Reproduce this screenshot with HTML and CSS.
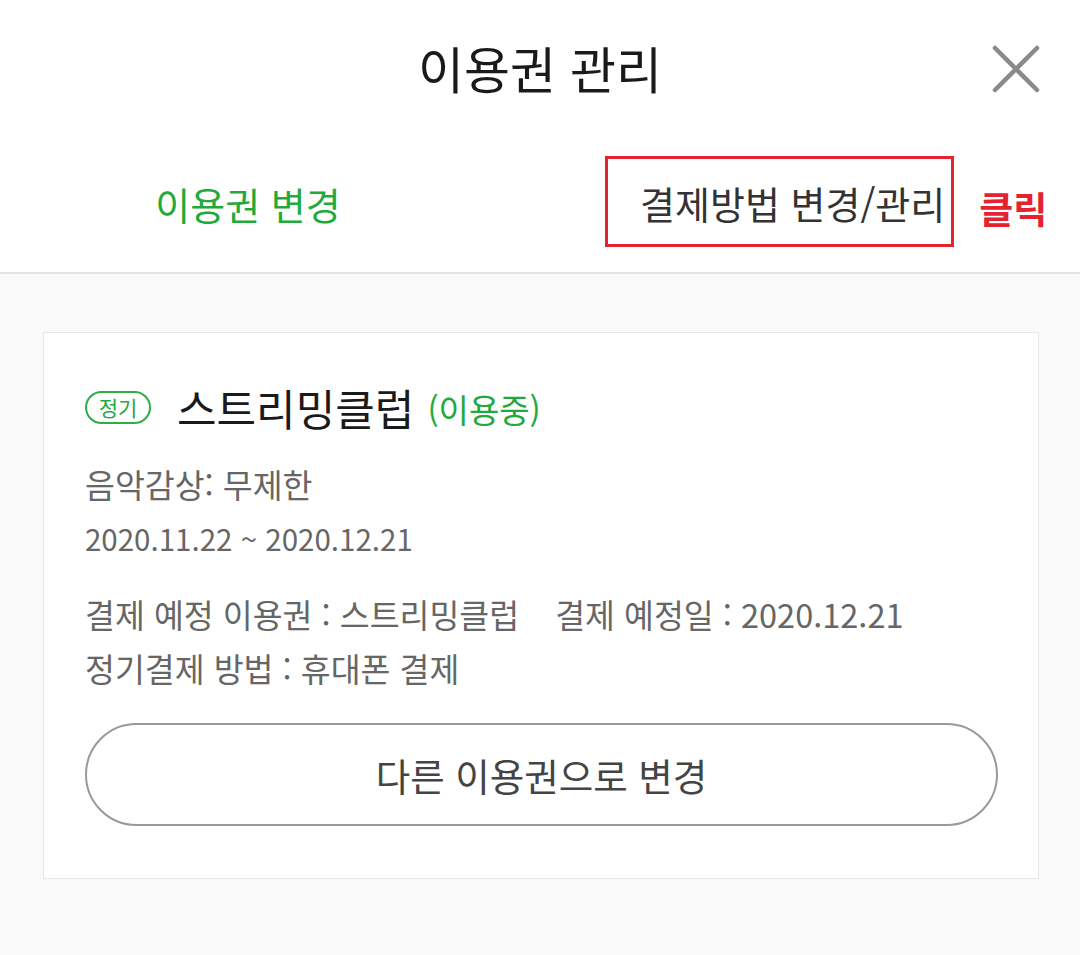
FILE: index.html
```html
<!DOCTYPE html>
<html lang="ko">
<head>
<meta charset="utf-8">
<title>이용권 관리</title>
<link rel="stylesheet" href="styles.css">
</head>
<body>
<div class="page">
  <header class="top">
    <div class="top-side"></div>
    <h1 class="title">이용권 관리</h1>
    <div class="top-side close-wrap">
      <svg class="close" width="48" height="48" viewBox="0 0 48 48" aria-label="닫기">
        <path d="M3 3 L45 45 M45 3 L3 45" stroke="#8a8a8a" stroke-width="4.5" stroke-linecap="round" fill="none"/>
      </svg>
    </div>
  </header>
  <nav class="tabs">
    <div class="tab tab-active">이용권 변경</div>
    <div class="tab-box">결제방법 변경/관리</div>
    <div class="click">클릭</div>
  </nav>
  <main class="content">
    <section class="card">
      <div class="card-head">
        <span class="badge">정기</span>
        <span class="plan">스트리밍클럽</span>
        <span class="status">(이용중)</span>
      </div>
      <div class="info first">음악감상: 무제한</div>
      <div class="info date">2020.11.22 ~ 2020.12.21</div>
      <div class="info pay">결제 예정 이용권 : 스트리밍클럽<span class="gap">결제 예정일 : 2020.12.21</span></div>
      <div class="info">정기결제 방법 : 휴대폰 결제</div>
      <button class="change-btn" type="button">다른 이용권으로 변경</button>
    </section>
  </main>
</div>
</body>
</html>
```
FILE: styles.css
```css
* { box-sizing: border-box; }
html, body { margin: 0; padding: 0; }
body {
  width: 1080px;
  height: 955px;
  background: #f9f9f9;
  font-family: "Noto Sans CJK KR", "Noto Sans", sans-serif;
  overflow: hidden;
}
.page { width: 1080px; }
.top {
  height: 136px;
  background: #fff;
  display: grid;
  grid-template-columns: 1fr auto 1fr;
  align-items: center;
}
.title {
  margin: 0;
  font-size: 50px;
  font-weight: 400;
  color: #1a1a1a;
  line-height: 1;
  padding-bottom: 2px;
}
.close-wrap {
  display: flex;
  justify-content: flex-end;
  padding-right: 40px;
  padding-top: 2px;
}
.close { display: block; }
.tabs {
  height: 138px;
  background: #fff;
  border-bottom: 2px solid #e4e4e4;
  display: flex;
  align-items: center;
}
.tab {
  width: 496px;
  text-align: center;
  font-size: 38px;
  line-height: 1;
}
.tab-active { color: #1faa3b; }
.tab-box {
  margin-left: 109px;
  height: 91px;
  margin-top: -6px;
  border: 3px solid #e3232f;
  padding: 4px 6px 0 32px;
  display: flex;
  align-items: center;
  font-size: 38px;
  color: #333;
  line-height: 1;
  white-space: nowrap;
}
.click {
  margin-left: 25px;
  font-size: 37px;
  font-weight: 700;
  color: #e3232f;
  line-height: 1;
  padding-top: 8px;
}
.content {
  padding: 58px 41px 78px 43px;
}
.card {
  background: #fff;
  border: 1px solid #e8e8e8;
  padding: 46px 41px 52px 41px;
}
.card-head {
  display: flex;
  align-items: center;
  height: 57px;
}
.badge {
  display: inline-flex;
  align-items: center;
  justify-content: center;
  width: 66px;
  height: 33px;
  border: 2px solid #2cae47;
  border-radius: 17px;
  color: #1faa3b;
  font-size: 21px;
  line-height: 1;
}
.plan {
  margin-left: 26px;
  font-size: 43px;
  color: #1a1a1a;
  line-height: 1;
}
.status {
  margin-left: 13px;
  font-size: 33px;
  color: #1faa3b;
  line-height: 1;
  padding-top: 4px;
}
.info {
  font-size: 32.5px;
  color: #666;
  line-height: 54px;
  white-space: nowrap;
}
.info.date { font-size: 29.5px; }
.info.first { margin-top: 21px; }
.info.pay { margin-top: 22px; }
.gap { margin-left: 36px; }
.change-btn {
  display: flex;
  align-items: center;
  justify-content: center;
  width: 913px;
  height: 103px;
  margin-top: 28px;
  background: #fff;
  border: 2px solid #999;
  border-radius: 52px;
  font-family: "Noto Sans CJK KR", "Noto Sans", sans-serif;
  font-size: 37.5px;
  color: #444;
  line-height: 1;
  padding: 0;
  cursor: pointer;
}
```
